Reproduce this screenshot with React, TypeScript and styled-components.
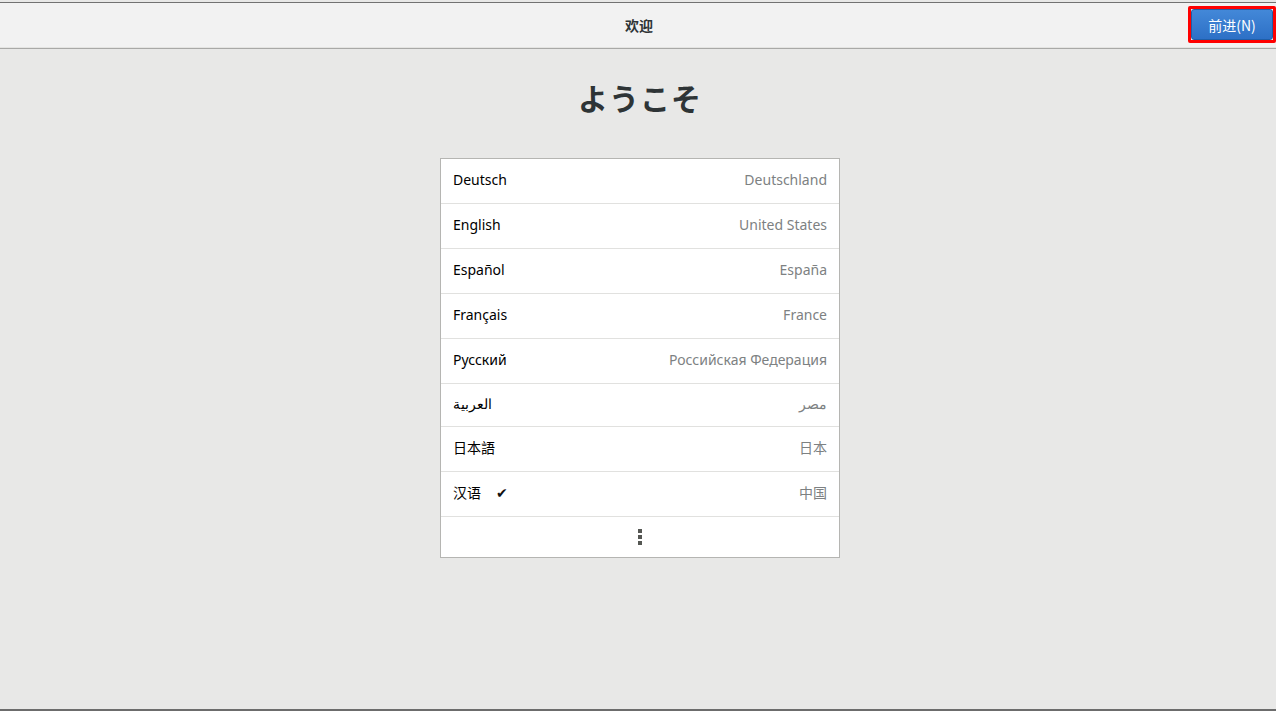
import React from 'react'
import styled, { createGlobalStyle } from 'styled-components'

const GlobalStyle = createGlobalStyle`
    html, body {
        margin: 0;
        padding: 0;
        background: #e8e8e7;
        font-family: "Noto Sans", "Noto Sans CJK SC", sans-serif;
    }
`

const Page = styled.div`
    height: 711px;
    box-sizing: border-box;
    padding-top: 2px;
    border-bottom: 2px solid #6c6c6c;
    display: flex;
    flex-direction: column;
    background: #e8e8e7;
`

const HeaderBar = styled.header`
    height: 47px;
    box-sizing: border-box;
    border-top: 1px solid #727272;
    border-bottom: 1px solid #a9a9a7;
    box-shadow: inset 0 -1px 0 #e4e4e2;
    background: #f2f2f2;
    display: grid;
    grid-template-columns: 1fr auto 1fr;
    align-items: center;
    padding-left: 2px;
`

const HeaderTitle = styled.div`
    font-family: "Noto Sans CJK SC", sans-serif;
    font-size: 14px;
    font-weight: 700;
    color: #2e3436;
    margin-top: -2px;
`

const Highlight = styled.div`
    justify-self: end;
    border: 3px solid #ff0000;
    border-radius: 2px;
    display: flex;
    margin-top: -2px;
`

const NextButton = styled.button`
    width: 82px;
    height: 31px;
    border: 1px solid #1f5ea8;
    border-radius: 3px;
    background: linear-gradient(#4388d8, #2d70c6);
    color: #ffffff;
    font-family: "Noto Sans CJK SC", sans-serif;
    font-size: 14px;
    padding: 0;
    cursor: pointer;
`

const Main = styled.main`
    flex: 1;
    display: flex;
    flex-direction: column;
    align-items: center;
    padding-left: 4px;
`

const Welcome = styled.h1`
    margin: 25px 0 0;
    height: 46px;
    line-height: 46px;
    font-family: "Noto Sans CJK JP", sans-serif;
    font-size: 30px;
    font-weight: 700;
    color: #2e3436;
    letter-spacing: 1px;
`

const LangList = styled.div`
    margin-top: 38px;
    width: 400px;
    box-sizing: border-box;
    border: 1px solid #b5b5b2;
    background: #ffffff;
`

const LangRow = styled.div<{ tall?: number }>`
    height: ${p => p.tall ?? 44}px;
    box-sizing: content-box;
    border-bottom: 1px solid #e1e1df;
    padding: 0 12px;
    display: flex;
    align-items: center;
    justify-content: space-between;
    font-size: 14px;
    line-height: 18px;
    & > * {
        margin-top: -3px;
    }
`

const LangName = styled.span`
    color: #000000;
    display: flex;
    align-items: center;
    font-family: "Noto Sans", "Noto Sans CJK SC", sans-serif;
`

const Region = styled.span`
    color: #7d8182;
    font-family: "Noto Sans", "Noto Sans CJK SC", sans-serif;
`

const Check = styled.span`
    margin-left: 15px;
    font-family: "DejaVu Sans", sans-serif;
    font-size: 14px;
    color: #111;
`

const MoreRow = styled.div`
    height: 40px;
    display: flex;
    align-items: center;
    justify-content: center;
`

const Dots = styled.div`
    display: flex;
    flex-direction: column;
    gap: 2px;
    span {
        width: 4px;
        height: 4px;
        background: #555753;
    }
`

const languages = [
    { name: 'Deutsch', region: 'Deutschland' },
    { name: 'English', region: 'United States' },
    { name: 'Español', region: 'España' },
    { name: 'Français', region: 'France' },
    { name: 'Русский', region: 'Российская Федерация' },
    { name: 'العربية', region: 'مصر', tall: 42 },
    { name: '日本語', region: '日本' },
    { name: '汉语', region: '中国', selected: true },
]

const App: React.FC = () => {
    return (
        <>
            <GlobalStyle />
            <Page>
                <HeaderBar>
                    <div />
                    <HeaderTitle>欢迎</HeaderTitle>
                    <Highlight>
                        <NextButton>前进(N)</NextButton>
                    </Highlight>
                </HeaderBar>
                <Main>
                    <Welcome>ようこそ</Welcome>
                    <LangList>
                        {languages.map(lang => (
                            <LangRow key={lang.name} tall={lang.tall}>
                                <LangName>
                                    {lang.name}
                                    {lang.selected && <Check>✔</Check>}
                                </LangName>
                                <Region>{lang.region}</Region>
                            </LangRow>
                        ))}
                        <MoreRow>
                            <Dots><span /><span /><span /></Dots>
                        </MoreRow>
                    </LangList>
                </Main>
            </Page>
        </>
    )
}

export default App
